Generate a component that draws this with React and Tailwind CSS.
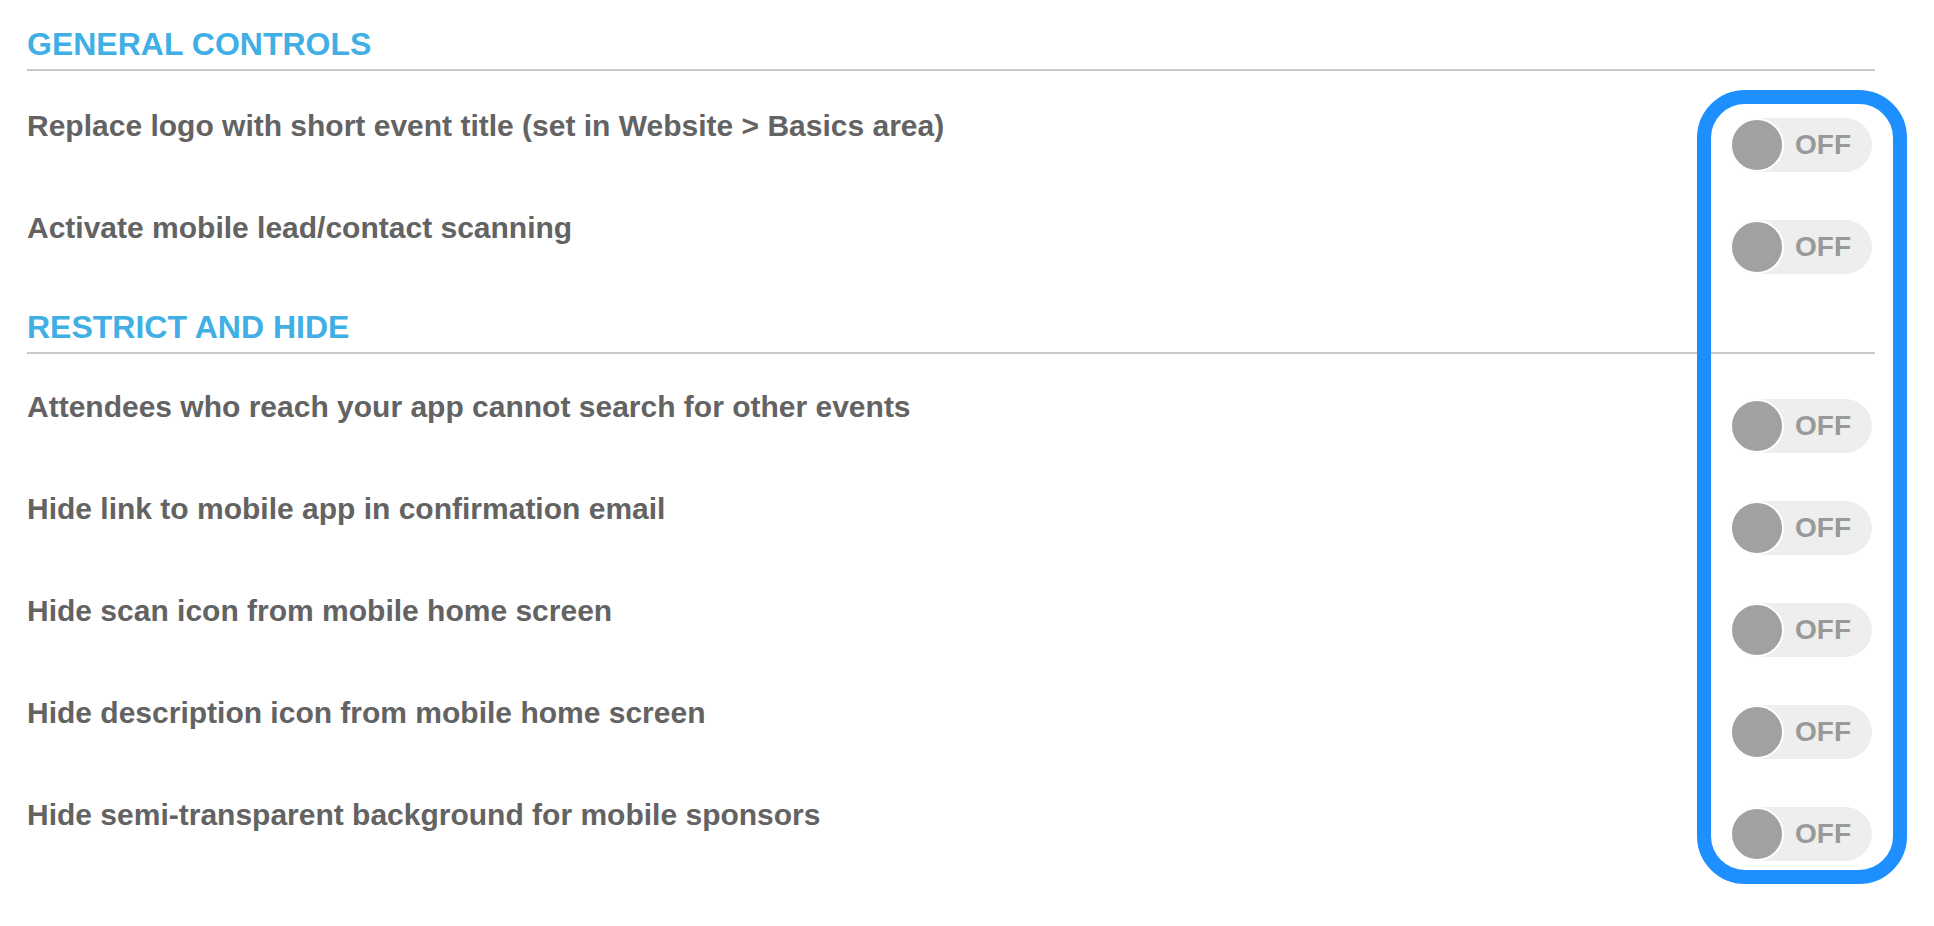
import React from "react";

const sections = [
  {
    title: "GENERAL CONTROLS",
    rows: [
      "Replace logo with short event title (set in Website > Basics area)",
      "Activate mobile lead/contact scanning",
    ],
  },
  {
    title: "RESTRICT AND HIDE",
    rows: [
      "Attendees who reach your app cannot search for other events",
      "Hide link to mobile app in confirmation email",
      "Hide scan icon from mobile home screen",
      "Hide description icon from mobile home screen",
      "Hide semi-transparent background for mobile sponsors",
    ],
  },
];

const Toggle = () => (
  <div className="flex items-center w-[142px] h-[54px] rounded-full bg-[#eeeeee] mr-[3px] mt-[9px]">
    <div className="w-[54px] h-[54px] rounded-full bg-[#a1a1a1] border-[2px] border-white" />
    <span className="ml-[11px] text-[28px] leading-none font-bold text-[#999999]">OFF</span>
  </div>
);

export default function App() {
  return (
    <div
      className="relative w-[1934px] h-[926px] bg-white pl-[27px] pr-[59px]"
      style={{ fontFamily: '"Liberation Sans", Arial, Helvetica, sans-serif' }}
    >
      {sections.map((section, i) => (
        <div key={section.title}>
          {/* Section heading */}
          <div
            className={`border-b-2 border-[#c9c9c9] pb-[11px] ${
              i === 0 ? "pt-[30px]" : "pt-0"
            }`}
          >
            <h2 className="text-[32px] leading-[28px] font-bold text-[#40afe5]">
              {section.title}
            </h2>
          </div>

          {/* Rows */}
          <div className={i === 0 ? "pt-[38px]" : "pt-[36px]"}>
            {section.rows.map((label) => (
              <div key={label} className="flex items-start justify-between h-[102px]">
                <p className="text-[30px] leading-[34px] font-bold text-[#636363]">
                  {label}
                </p>
                <Toggle />
              </div>
            ))}
          </div>
        </div>
      ))}

      {/* Highlight box around toggles */}
      <div className="absolute left-[1697px] top-[90px] w-[210px] h-[794px] border-[14px] border-[#1e8ffe] rounded-[48px] pointer-events-none" />
    </div>
  );
}
